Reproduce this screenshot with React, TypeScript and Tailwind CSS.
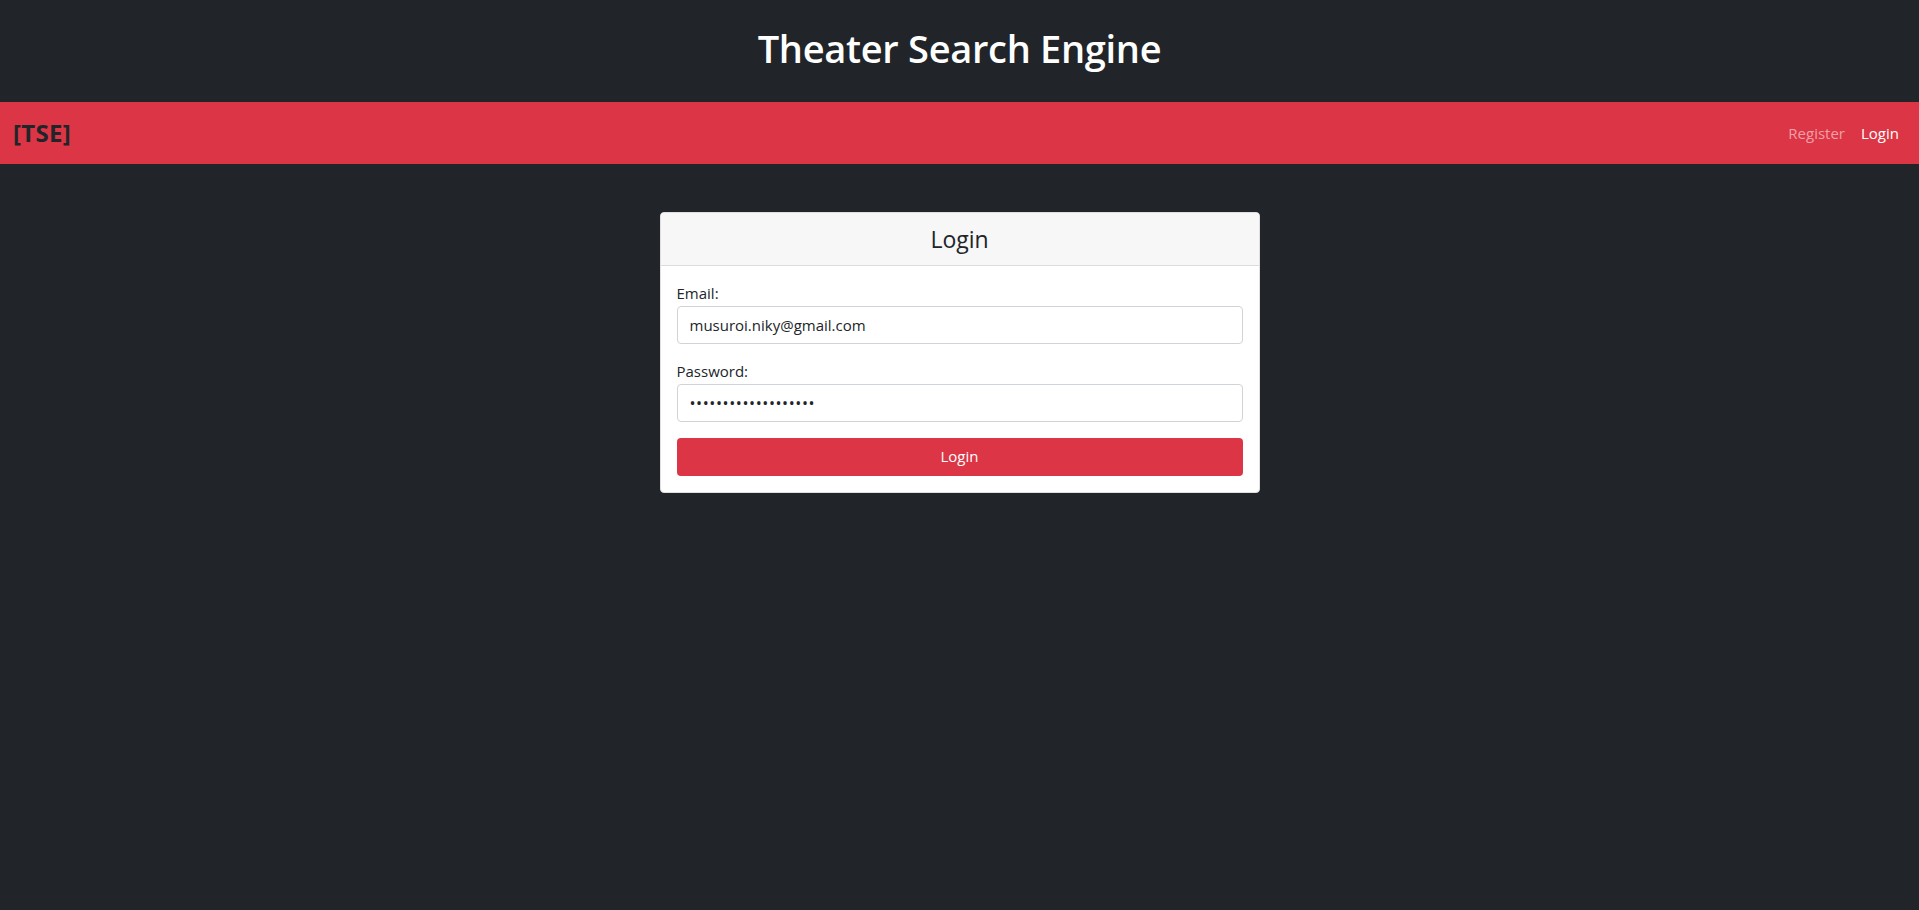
import React, { useState } from "react";

const App = () => {
  const [email, setEmail] = useState("musuroi.niky@gmail.com");
  const [password, setPassword] = useState("niky1234567890abcde");

  return (
    <div className="min-h-screen w-full bg-[#212529] font-['Open_Sans',sans-serif] text-[#212529]">
      {/* title */}
      <div className="flex h-[102px] items-center justify-center pb-[7px]">
        <h1 className="text-[38px] font-semibold leading-none tracking-[-0.3px] text-white">
          Theater Search Engine
        </h1>
      </div>

      {/* navbar */}
      <nav className="flex h-[62px] items-center justify-between bg-[#dc3545] pl-[13px] pr-[20px]">
        <span className="text-[24px] font-bold tracking-[0.3px] text-[#212529]">[TSE]</span>
        <div className="flex items-center gap-[16px] text-[15px]">
          <a className="cursor-pointer text-[#f0a0a8]">Register</a>
          <a className="cursor-pointer text-white">Login</a>
        </div>
      </nav>

      {/* login card */}
      <div className="flex justify-center pt-[48px]">
        <div className="w-[600px] overflow-hidden rounded-[4px] border border-[#dfdfdf] bg-white">
          <div className="flex h-[53px] items-center justify-center border-b border-[#dcdcdc] bg-[#f7f7f7]">
            <span className="text-[23px] text-[#212529]">Login</span>
          </div>
          <div className="flex flex-col p-[16px]">
            <label className="h-[24px] text-[15px] leading-[22px]">Email:</label>
            <input
              className="h-[38px] rounded-[4px] border border-[#ced4da] px-[12px] text-[15px] text-[#212529] outline-none"
              value={email}
              onChange={(e) => setEmail(e.target.value)}
            />
            <label className="mt-[16px] h-[24px] text-[15px] leading-[22px]">Password:</label>
            <input
              type="password"
              className="h-[38px] rounded-[4px] border border-[#ced4da] px-[12px] text-[16px] tracking-[0.6px] text-[#212529] outline-none"
              value={password}
              onChange={(e) => setPassword(e.target.value)}
            />
            <button className="mt-[16px] h-[38px] rounded-[4px] bg-[#dc3545] pb-[2px] text-[15px] text-white">
              Login
            </button>
          </div>
        </div>
      </div>
    </div>
  );
};

export default App;
